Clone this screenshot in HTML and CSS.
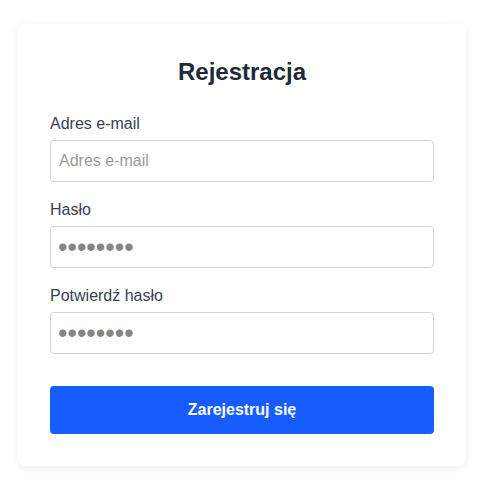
FILE: index.html
```html
<!DOCTYPE html>
<html lang="pl">
<head>
<meta charset="utf-8">
<title>Rejestracja</title>
<link rel="stylesheet" href="styles.css">
</head>
<body>
<div class="page">
  <form class="card">
    <h2 class="title">Rejestracja</h2>
    <div class="field">
      <label class="label" for="email">Adres e-mail</label>
      <input class="input" id="email" type="email" placeholder="Adres e-mail">
    </div>
    <div class="field">
      <label class="label" for="pass">Hasło</label>
      <input class="input input-pass" id="pass" type="password" value="password">
    </div>
    <div class="field">
      <label class="label" for="pass2">Potwierdź hasło</label>
      <input class="input input-pass" id="pass2" type="password" value="password">
    </div>
    <button class="button" type="button">Zarejestruj się</button>
  </form>
</div>
</body>
</html>
```
FILE: styles.css
```css
html, body {
  margin: 0;
  padding: 0;
  background: #ffffff;
  font-family: "Liberation Sans", Arial, sans-serif;
}
.page {
  padding: 24px 26px 22px 18px;
}
.card {
  box-sizing: border-box;
  width: 448px;
  padding: 32px;
  background: #ffffff;
  border-radius: 8px;
  box-shadow: 0 2px 10px rgba(0, 0, 0, 0.08);
  display: flex;
  flex-direction: column;
}
.title {
  margin: 2px 0 28px;
  font-size: 24px;
  font-weight: bold;
  text-align: center;
  color: #1f2937;
  line-height: 28px;
}
.field {
  display: flex;
  flex-direction: column;
  margin-bottom: 18px;
}
.label {
  font-size: 16px;
  line-height: 20px;
  color: #374151;
  margin-bottom: 6px;
}
.input {
  box-sizing: border-box;
  height: 42px;
  padding: 0 8px;
  border: 1px solid #d1d5db;
  border-radius: 4px;
  font-family: "Liberation Sans", Arial, sans-serif;
  font-size: 16px;
  color: #888888;
  outline: none;
}
.input-pass {
  font-size: 27px;
  padding: 0 7px;
  color: #858585;
}
.input::placeholder {
  color: #9a9a9a;
}
.button {
  margin-top: 14px;
  height: 48px;
  border: none;
  border-radius: 4px;
  background: #175cff;
  color: #ffffff;
  font-family: "Liberation Sans", Arial, sans-serif;
  font-size: 16px;
  font-weight: bold;
}
```
